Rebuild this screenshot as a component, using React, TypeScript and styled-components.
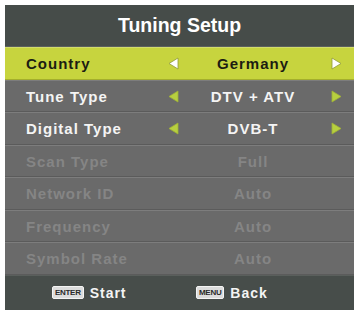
import styled, { createGlobalStyle } from "styled-components";

const GlobalStyle = createGlobalStyle`
  body {
    margin: 0;
    background: #ffffff;
    font-family: "Liberation Sans", Arial, sans-serif;
  }
`;

const Page = styled.div`
  padding: 5px 5px 0 5px;
`;

const Panel = styled.div`
  width: 349px;
  background: #6a6a6a;
  display: flex;
  flex-direction: column;
`;

const Title = styled.div`
  height: 41px;
  background: #464c49;
  color: #ffffff;
  font-size: 19.5px;
  font-weight: bold;
  display: flex;
  align-items: center;
  justify-content: center;
  border-bottom: 1px solid #5c605e;
`;

const Row = styled.div<{ $selected?: boolean }>`
  height: 31.5px;
  display: grid;
  grid-template-columns: 1fr 20px 140px 26px;
  align-items: center;
  padding: 0 5px 0 21px;
  background: ${(p) => (p.$selected ? "#c7d43e" : "#6a6a6a")};
  border-top: 1px solid ${(p) => (p.$selected ? "#d3dd6a" : "#7d7d7d")};
  box-shadow: inset 0 -1px 0 ${(p) => (p.$selected ? "#a4ae2c" : "#5b5b5b")};
  font-size: 15px;
  font-weight: bold;
  letter-spacing: 1px;
`;

const Label = styled.span<{ $tone: "dark" | "light" | "dim" }>`
  color: ${(p) =>
    p.$tone === "dark" ? "#1c1c12" : p.$tone === "light" ? "#f4f4f4" : "#858585"};
`;

const Value = styled(Label)`
  text-align: center;
`;

const ArrowCell = styled.span`
  display: flex;
  justify-content: center;
  align-items: center;
`;

const Footer = styled.div`
  height: 34px;
  background: #474d4a;
  border-top: 1px solid #5a5f5c;
  display: flex;
  align-items: center;
  padding-left: 47px;
`;

const Hint = styled.div`
  display: flex;
  align-items: center;
  gap: 6px;
  width: 144px;
`;

const Key = styled.span`
  background: #dcdcdc;
  color: #2a2a2a;
  border: 1px solid #f4f4f4;
  border-radius: 2px;
  font-size: 8px;
  font-weight: bold;
  padding: 1px 2px;
  line-height: 9px;
  letter-spacing: -0.3px;
`;

const HintText = styled.span`
  color: #f4f4f4;
  font-size: 14px;
  font-weight: bold;
  letter-spacing: 1px;
`;

function Arrow({ dir, selected }: { dir: "left" | "right"; selected: boolean }) {
  const pts = dir === "left" ? "10,1 10,12 1,6.5" : "1,1 1,12 10,6.5";
  return (
    <svg width="11" height="13" viewBox="0 0 11 13">
      <polygon
        points={pts}
        fill={selected ? "#ffffff" : "#b7cf3f"}
        stroke={selected ? "#8f9a3a" : "#9fb236"}
        strokeWidth="0.8"
        strokeLinejoin="round"
      />
    </svg>
  );
}

type Item = { label: string; value: string; state: "selected" | "active" | "disabled" };

const items: Item[] = [
  { label: "Country", value: "Germany", state: "selected" },
  { label: "Tune Type", value: "DTV + ATV", state: "active" },
  { label: "Digital Type", value: "DVB-T", state: "active" },
  { label: "Scan Type", value: "Full", state: "disabled" },
  { label: "Network ID", value: "Auto", state: "disabled" },
  { label: "Frequency", value: "Auto", state: "disabled" },
  { label: "Symbol Rate", value: "Auto", state: "disabled" },
];

export default function App() {
  return (
    <>
      <GlobalStyle />
      <Page>
        <Panel>
          <Title>Tuning Setup</Title>
          {items.map((it) => {
            const sel = it.state === "selected";
            const tone = sel ? "dark" : it.state === "active" ? "light" : "dim";
            const arrows = it.state !== "disabled";
            return (
              <Row key={it.label} $selected={sel}>
                <Label $tone={tone}>{it.label}</Label>
                <ArrowCell>{arrows && <Arrow dir="left" selected={sel} />}</ArrowCell>
                <Value $tone={tone}>{it.value}</Value>
                <ArrowCell>{arrows && <Arrow dir="right" selected={sel} />}</ArrowCell>
              </Row>
            );
          })}
          <Footer>
            <Hint>
              <Key>ENTER</Key>
              <HintText>Start</HintText>
            </Hint>
            <Hint>
              <Key>MENU</Key>
              <HintText>Back</HintText>
            </Hint>
          </Footer>
        </Panel>
      </Page>
    </>
  );
}
